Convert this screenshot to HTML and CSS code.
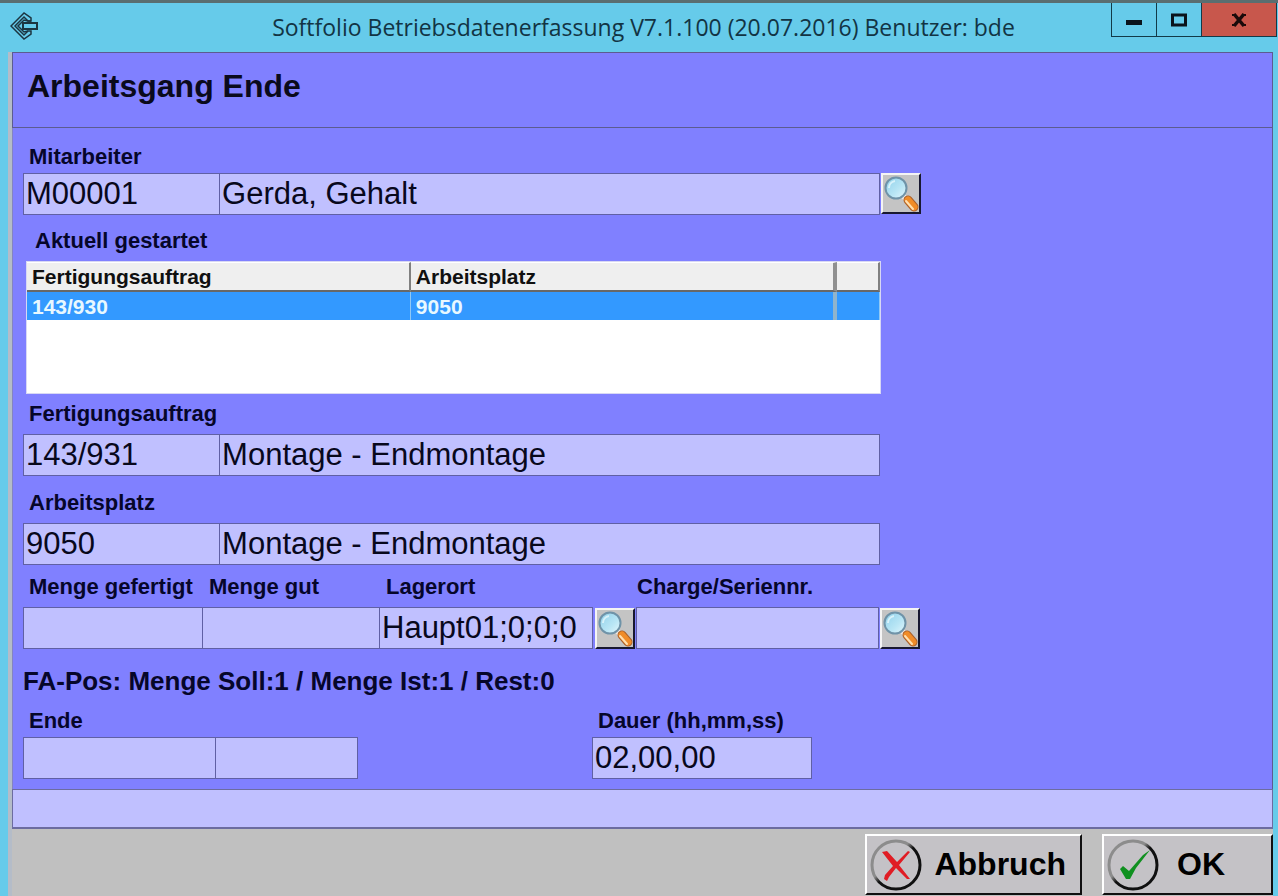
FILE: index.html
```html
<!DOCTYPE html>
<html lang="de">
<head>
  <meta charset="UTF-8">
  <meta name="viewport" content="width=device-width, initial-scale=1.0">
  <title>Softfolio Betriebsdatenerfassung</title>
  <link rel="stylesheet" href="styles.css">
</head>
<body>
  <svg class="sprite" aria-hidden="true">
    <defs>
      <linearGradient id="glass" x1="0" y1="0" x2="1" y2="1">
        <stop offset="0" stop-color="#8fd0ea"/>
        <stop offset="0.6" stop-color="#b9e6f5"/>
        <stop offset="1" stop-color="#e4f7fc"/>
      </linearGradient>
      <linearGradient id="ring" x1="0" y1="0" x2="1" y2="1">
        <stop offset="0.4" stop-color="#8c8c8c"/>
        <stop offset="0.5" stop-color="#101010"/>
      </linearGradient>
      <symbol id="lupe" viewBox="0 0 36 36">
        <path d="M20 20l4 4" stroke="#f4ece4" stroke-width="5" stroke-linecap="round"/>
        <path d="M25 24l6 7" stroke="#a8602c" stroke-width="9" stroke-linecap="round"/>
        <path d="M25 24l6 7" stroke="#f08c28" stroke-width="7" stroke-linecap="round"/>
        <path d="M23 25l7 8" stroke="#ffe0b0" stroke-width="2" stroke-linecap="round"/>
        <circle cx="13" cy="12" r="10.500" fill="url(#glass)" stroke="#6f93a8" stroke-width="2"/>
        <path d="M6 12a7 7 0 0 1 6-7" fill="none" stroke="#d8f2fa" stroke-width="2"/>
      </symbol>
    </defs>
  </svg>

  <div class="window">
    <header class="titlebar">
      <svg class="app-icon" viewBox="0 0 28 28" fill="none" stroke="#1c3540" stroke-width="1.500">
        <path d="M14 1L1 14L14 27L21 22V19H18L14 23L5 14L14 5L18 9H21V6Z"/>
        <path d="M21 9H18L14 8L8 14L14 20L18 19"/>
        <path d="M13 11H27V17H13Z" stroke-width="2"/>
      </svg>
      <span class="title">Softfolio Betriebsdatenerfassung V7.1.100 (20.07.2016) Benutzer: bde</span>
      <div class="window-buttons">
        <button type="button" class="win-btn" aria-label="Minimieren">
          <svg width="18" height="16" viewBox="0 0 18 16"><path d="M1 8h16v5H1z" fill="#0a141c"/></svg>
        </button>
        <button type="button" class="win-btn" aria-label="Maximieren">
          <svg width="18" height="16" viewBox="0 0 18 16"><path d="M2.500 3h13v10h-13z" fill="none" stroke="#0a141c" stroke-width="3"/></svg>
        </button>
        <button type="button" class="win-btn close" aria-label="Schließen">
          <svg width="18" height="16" viewBox="0 0 18 16"><path d="M4 2l10 12M14 2l-10 12" stroke="#1a0a0a" stroke-width="3.500"/><path d="M2 3h4M12 3h4M2 13h4M12 13h4" stroke="#1a0a0a" stroke-width="2"/></svg>
        </button>
      </div>
    </header>

    <main class="client">
      <div class="heading">
        <h1>Arbeitsgang Ende</h1>
      </div>

      <form class="form" id="bdeForm">
        <div class="group">
          <label for="mitarbeiter">Mitarbeiter</label>
          <div class="row with-search">
            <div class="pair">
              <input type="text" id="mitarbeiter" value="M00001">
              <input type="text" aria-label="Name" value="Gerda, Gehalt">
            </div>
            <button type="button" class="search" aria-label="Mitarbeiter suchen"><svg><use href="#lupe"/></svg></button>
          </div>
        </div>

        <div class="group started">
          <div class="caption" id="startedLabel">Aktuell gestartet</div>
          <div class="list">
            <table aria-labelledby="startedLabel">
              <thead>
                <tr><th class="col-order">Fertigungsauftrag</th><th class="col-place">Arbeitsplatz</th><th></th></tr>
              </thead>
              <tbody>
                <tr class="selected"><td>143/930</td><td>9050</td><td></td></tr>
              </tbody>
            </table>
          </div>
        </div>

        <div class="group order">
          <label for="auftrag">Fertigungsauftrag</label>
          <div class="row">
            <div class="pair">
              <input type="text" id="auftrag" value="143/931">
              <input type="text" aria-label="Bezeichnung Fertigungsauftrag" value="Montage - Endmontage">
            </div>
          </div>
        </div>

        <div class="group place">
          <label for="platz">Arbeitsplatz</label>
          <div class="row">
            <div class="pair">
              <input type="text" id="platz" value="9050">
              <input type="text" aria-label="Bezeichnung Arbeitsplatz" value="Montage - Endmontage">
            </div>
          </div>
        </div>

        <div class="group amounts">
          <div class="cell">
            <label for="gefertigt">Menge gefertigt</label>
            <input type="text" id="gefertigt">
          </div>
          <div class="cell">
            <label for="gut">Menge gut</label>
            <input type="text" id="gut">
          </div>
          <div class="cell">
            <label for="lagerort">Lagerort</label>
            <input type="text" id="lagerort" value="Haupt01;0;0;0">
          </div>
          <button type="button" class="search" aria-label="Lagerort suchen"><svg><use href="#lupe"/></svg></button>
          <div class="cell charge">
            <label for="charge">Charge/Seriennr.</label>
            <input type="text" id="charge">
          </div>
          <button type="button" class="search" aria-label="Charge suchen"><svg><use href="#lupe"/></svg></button>
        </div>

        <p class="summary">FA-Pos: Menge Soll:1 / Menge Ist:1 / Rest:0</p>

        <div class="group times">
          <div class="cell end">
            <label for="ende">Ende</label>
            <div class="pair">
              <input type="text" id="ende">
              <input type="text" aria-label="Ende Uhrzeit">
            </div>
          </div>
          <div class="cell duration">
            <label for="dauer">Dauer (hh,mm,ss)</label>
            <input type="text" id="dauer" value="02,00,00">
          </div>
        </div>
      </form>

      <div class="status" role="status"></div>

      <footer class="actions">
        <button type="button" class="action">
          <svg viewBox="0 0 52 52" fill="none">
            <circle cx="26" cy="26" r="24" stroke="url(#ring)" stroke-width="3"/>
            <path d="M12 13l5-1l10 11l11-11l2 1L29 26l11 14l-3 0L26 29L19 38l-2 4l-3-2l1-4l8-9Z" fill="#e01c24"/>
          </svg>
          <span>Abbruch</span>
        </button>
        <button type="submit" form="bdeForm" class="action ok">
          <svg viewBox="0 0 52 52" fill="none">
            <circle cx="26" cy="26" r="24" stroke="url(#ring)" stroke-width="3"/>
            <path d="M13 30l3-3l6 5L36 16l7-5L29 29l-6 11l-4 0Z" fill="#109020"/>
          </svg>
          <span>OK</span>
        </button>
      </footer>
    </main>
  </div>
</body>
</html>
```
FILE: styles.css
```css
* {
  box-sizing: border-box;
}

body {
  margin: 0;
  font-family: "Liberation Sans", Arial, sans-serif;
  color: #06062a;
}

button, input {
  font-family: inherit;
  color: inherit;
}

.sprite {
  display: block;
  width: 0;
  height: 0;
}

.window {
  display: flex;
  flex-direction: column;
  min-height: 100vh;
  border-top: 3px solid #5a6e70;
  background-color: #66cbea;
}

/* title bar */

.titlebar {
  display: grid;
  grid-template-columns: 1fr auto 1fr;
  height: 49px;
  padding: 0 1px 0 10px;
}

.app-icon {
  width: 28px;
  height: 28px;
  margin-top: 9px;
}

.title {
  font-family: "Open Sans", "Noto Sans", sans-serif;
  font-size: 23px;
  line-height: 48px;
  color: #123444;
  white-space: nowrap;
}

.window-buttons {
  display: flex;
  justify-self: end;
  height: 34px;
  border: 1px solid #123a48;
  border-top: none;
}

.win-btn {
  display: flex;
  align-items: center;
  justify-content: center;
  width: 45px;
  padding: 0;
  border: none;
  border-right: 1px solid #123a48;
  background: none;
}

.win-btn.close {
  width: 74px;
  border-right: none;
  background-color: #c8574c;
}

/* client area */

.client {
  display: flex;
  flex: 1;
  flex-direction: column;
  margin: 0 5px 0 8px;
  border-left: 4px solid #b4bcc8;
  background-color: #c0c0c0;
}

.heading {
  height: 76px;
  padding: 14px;
  border: 1px solid #5c5c90;
  background-color: #8080ff;
}

h1 {
  margin: 0;
  font-size: 32px;
  line-height: 38px;
  color: #0a0a1c;
}

.form {
  padding: 17px 0 10px 10px;
  border-right: 1px solid #5c5c90;
  border-left: 1px solid #8484c0;
  background-color: #8080ff;
}

.group, .summary {
  max-width: 898px;
}

label, .caption {
  display: block;
  padding-left: 6px;
  margin-bottom: 8px;
  font-size: 22px;
  font-weight: bold;
  line-height: 24px;
  white-space: nowrap;
}

.row {
  padding-right: 41px;
}

.row.with-search {
  display: flex;
  gap: 1px;
  padding-right: 0;
}

.pair {
  display: grid;
  flex: 1;
  grid-template-columns: 23fr 77fr;
}

input {
  width: 100%;
  min-width: 0;
  height: 42px;
  padding: 0 2px;
  border: 1px solid #6060a4;
  border-radius: 0;
  background-color: #c0c0ff;
  font-size: 31px;
  color: #08081c;
}

.pair input + input,
.cell + .cell input {
  border-left: none;
}

.search {
  width: 40px;
  height: 41px;
  padding: 0;
  border: 2px solid;
  border-color: #f4f4f4 #181830 #181830 #f4f4f4;
  background-color: #c4c4c4;
}

.search svg {
  display: block;
  width: 36px;
  height: 36px;
}

.group:first-child label,
.times label {
  margin-bottom: 4px;
}

.started {
  margin-top: 14px;
  padding: 0 40px 0 3px;
}

.caption {
  padding-left: 9px;
}

.list {
  min-height: 133px;
  border: 1px solid #d8d8f4;
  background-color: #fff;
}

table {
  width: 100%;
  border-collapse: separate;
  border-spacing: 0;
  table-layout: fixed;
  font-size: 21px;
  font-weight: bold;
  line-height: 27px;
}

th, td {
  height: 28px;
  padding: 0 5px;
  text-align: left;
}

th {
  border-right: 2px solid #808080;
  border-bottom: 2px solid #686868;
  border-top: 1px solid #fff;
  background-color: #efefef;
  color: #101010;
}

td {
  border-right: 1px solid #90c8f4;
  background-color: #3399ff;
  color: #e8f8ff;
}

.col-order {
  width: 45%;
}

.col-place {
  width: 50%;
}

th.col-place {
  border-right: 4px solid #909090;
}

td:nth-child(2) {
  border-right: 4px solid #90b4cc;
}

.order {
  margin-top: 8px;
}

.place {
  margin-top: 15px;
}

.amounts {
  display: grid;
  grid-template-columns: 180fr 177fr 213fr 43px 243fr 42px;
  align-items: end;
  margin-top: 10px;
}

.amounts .search {
  justify-self: center;
}

.charge label {
  padding-left: 1px;
}

.summary {
  margin: 18px 0 14px;
  font-size: 26px;
  font-weight: bold;
  line-height: 28px;
}

.times {
  display: grid;
  grid-template-columns: 335fr 234fr 220fr 109fr;
}

.duration {
  grid-column: 3;
}

.times .pair {
  grid-template-columns: 193fr 142fr;
}

.times .cell + .cell input {
  border-left: 1px solid #6060a4;
}

.status {
  height: 40px;
  border: 1px solid #6c6ca0;
  border-bottom-width: 2px;
  background-color: #c0c0ff;
}

/* footer buttons */

.actions {
  display: flex;
  flex: 1;
  justify-content: flex-end;
  gap: 20px;
  padding: 5px 0 0;
}

.action {
  display: flex;
  align-items: center;
  gap: 12px;
  height: 61px;
  padding: 0 14px 0 3px;
  border: 2px solid;
  border-color: #fff #101010 #101010 #fff;
  background-color: #c4c2c6;
  font-size: 32px;
  font-weight: bold;
  color: #000;
}

.action svg {
  width: 52px;
  height: 52px;
}

.action.ok {
  gap: 18px;
  padding-right: 46px;
}
```
